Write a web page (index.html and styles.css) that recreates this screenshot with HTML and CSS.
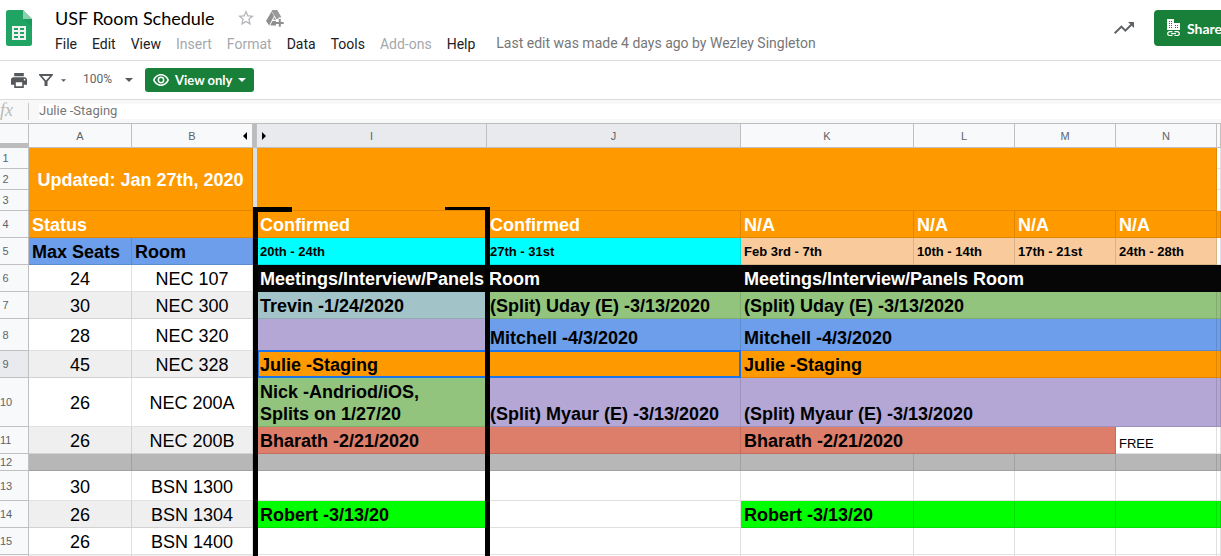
FILE: index.html
```
<!DOCTYPE html>
<html lang="en">
<head>
<meta charset="utf-8">
<title>USF Room Schedule</title>
<link rel="stylesheet" href="styles.css">
</head>
<body>
<header class="header">
  <svg class="logo" viewBox="0 0 26 36" aria-hidden="true">
    <path fill="#1fa463" d="M2.500 0H17l9 9v24.500a2.500 2.500 0 0 1-2.500 2.500h-21A2.500 2.500 0 0 1 0 33.500v-31A2.500 2.500 0 0 1 2.500 0z"/>
    <path fill="#8ed1b1" d="M17 0l9 9h-9z"/>
    <path fill="#179055" d="M17.500 9H26v8z" opacity=".5"/>
    <path fill="#f1f1f1" fill-rule="evenodd" d="M6 16h14v14H6zM8 18v2h4v-2zm6 0v2h4v-2zM8 22v2h4v-2zm6 0v2h4v-2zM8 26v2h4v-2zm6 0v2h4v-2z"/>
  </svg>
  <div class="doc">
    <div class="doc-title">
      <h1 class="title">USF Room Schedule</h1>
      <button class="icon-btn star" aria-label="Star">
        <svg width="16" height="16" viewBox="2 2 20 20"><path fill="#b4b6b9" d="M22 9.240l-7.190-.62L12 2 9.190 8.630 2 9.240l5.460 4.730L5.820 21 12 17.270 18.180 21l-1.630-7.030zM12 15.400l-3.760 2.270 1-4.280-3.320-2.880 4.380-.38L12 6.100l1.710 4.040 4.380.38-3.320 2.880 1 4.280z"/></svg>
      </button>
      <button class="icon-btn" aria-label="Add to My Drive">
        <svg width="18" height="17" viewBox="0 0 18 17"><path fill="#9a9a9a" d="M6.300 0h5l4.200 7.500h-3V9h-2L5.500.9z"/><path fill="#8f8f8f" d="M5.500 1.500L8 6 3.200 15.500 0 11z"/><path fill="#8f8f8f" d="M6.500 11H10v4.500H4.200zM8.600 7.200l1.400 2.600H7.200zM12.800 9h2v2.900h2.900v2h-2.900v2.900h-2v-2.900h-2.900v-2h2.900z"/></svg>
      </button>
    </div>
    <nav class="menu" aria-label="Menu bar">
      <button>File</button><button>Edit</button><button>View</button><button disabled>Insert</button><button disabled>Format</button><button>Data</button><button>Tools</button><button disabled>Add-ons</button><button>Help</button>
      <span class="last-edit">Last edit was made 4 days ago by Wezley Singleton</span>
    </nav>
  </div>
  <button class="icon-btn trend" aria-label="Activity">
    <svg width="20" height="12" viewBox="2 6 20 12"><path fill="#5f6368" d="M16 6l2.290 2.290-4.880 4.880-4-4L2 16.590 3.410 18l6-6 4 4 6.300-6.290L22 12V6z"/></svg>
  </button>
  <button class="share">
    <svg width="14" height="18" viewBox="0 0 14 18"><path fill="#fff" d="M0 0h7v4h6v7H0z"/><path fill="#188038" d="M2 2h1v1H2zM4 2h1v1H4zM2 4h1v1H2zM4 4h1v1H4zM2 6h1v1H2zM4 6h1v1H4zM2 8h1v1H2zM4 8h1v1H4zM8 6h1v1H8zM10 6h1v1h-1zM8 8h1v1H8zM10 8h1v1h-1z"/><path fill="none" stroke="#fff" stroke-width="1.200" d="M5.500 12.700H2.600a1.900 1.900 0 0 0 0 3.800h2.900M7.500 12.700h2.900a1.900 1.900 0 0 1 0 3.800H7.500M4 14.600h5"/></svg>
    <span>Share</span>
  </button>
</header>

<div class="toolbar" role="toolbar">
  <button class="icon-btn print" aria-label="Print">
    <svg width="16" height="15" viewBox="2 3 20 18" preserveAspectRatio="none"><path fill="#55585c" d="M19 8H5c-1.660 0-3 1.340-3 3v6h4v4h12v-4h4v-6c0-1.660-1.340-3-3-3zm-3 11H8v-5h8zm3-7a1 1 0 1 1 0-2 1 1 0 0 1 0 2zM18 3H6v4h12z"/></svg>
  </button>
  <button class="icon-btn filter" aria-label="Filter views">
    <svg width="14" height="12" viewBox="0 0 14 12"><path fill="#55585c" fill-rule="evenodd" d="M0 0h14v1L8.500 7.500V12h-3V7.500L0 1zM3 2l4 4.600L11 2z"/></svg>
    <svg width="5" height="3" viewBox="0 0 6 3"><path fill="#55585c" d="M0 0h6L3 3z"/></svg>
  </button>
  <label class="zoom">
    <select aria-label="Zoom"><option>100%</option></select>
    <svg width="8" height="4" viewBox="0 0 8 4"><path fill="#55585c" d="M0 0h8L4 4z"/></svg>
  </label>
  <button class="view-only">
    <svg width="16" height="12" viewBox="0 0 16 12"><path fill="#fff" fill-rule="evenodd" d="M8 0c3.600 0 6.700 2.500 8 6-1.300 3.500-4.400 6-8 6S1.300 9.500 0 6c1.300-3.500 4.400-6 8-6zm0 1.600C5.200 1.600 2.900 3.300 1.700 6c1.200 2.700 3.500 4.400 6.300 4.400s5.100-1.700 6.300-4.400C13.100 3.300 10.800 1.600 8 1.600z"/><circle cx="8" cy="6" r="2.700" fill="none" stroke="#fff" stroke-width="1.500"/></svg>
    <span>View only</span>
    <svg width="8" height="4" viewBox="0 0 8 4"><path fill="#fff" d="M0 0h8L4 4z"/></svg>
  </button>
</div>

<div class="formula">
  <label class="fx" for="formula">fx</label>
  <input id="formula" value="Julie -Staging" readonly>
</div>

<main class="sheet">
<table class="grid">
  <colgroup><col class="w-num"><col class="w-a"><col class="w-b"><col class="w-freeze"><col class="w-i"><col class="w-j"><col class="w-k"><col class="w-l"><col class="w-l"><col class="w-l"><col></colgroup>
  <thead>
    <tr class="letters">
      <th class="corner"></th><th>A</th>
      <th>B<button class="reveal left" aria-label="Show hidden columns"></button></th>
      <th class="freeze-head"></th>
      <th class="on"><button class="reveal right" aria-label="Show hidden columns"></button>I</th>
      <th class="on">J</th><th>K</th><th>L</th><th>M</th><th>N</th><th></th>
    </tr>
  </thead>
  <tbody>
    <tr class="h21"><th>1</th><td class="orange head center" colspan="2" rowspan="3">Updated: Jan 27th, 2020</td><td class="freeze" rowspan="3"></td><td class="orange" colspan="6" rowspan="3"></td><td></td></tr>
    <tr class="h21"><th>2</th><td></td></tr>
    <tr class="h21"><th>3</th><td></td></tr>
    <tr class="h27"><th>4</th><td class="orange head" colspan="2">Status</td><td class="freeze" rowspan="13"></td><td class="orange head">Confirmed</td><td class="orange head">Confirmed</td><td class="orange head">N/A</td><td class="orange head">N/A</td><td class="orange head">N/A</td><td class="orange head">N/A</td><td class="orange"></td></tr>
    <tr class="h27"><th>5</th><td class="blue bold">Max Seats</td><td class="blue bold">Room</td><td class="cyan date">20th - 24th</td><td class="cyan date">27th - 31st</td><td class="peach date">Feb 3rd - 7th</td><td class="peach date">10th - 14th</td><td class="peach date">17th - 21st</td><td class="peach date">24th - 28th</td><td></td></tr>
    <tr class="h27"><th>6</th><td class="room">24</td><td class="room">NEC 107</td><td class="black head" colspan="2">Meetings/Interview/Panels Room</td><td class="black head" colspan="4">Meetings/Interview/Panels Room</td><td class="black"></td></tr>
    <tr class="h27"><th>7</th><td class="room alt">30</td><td class="room alt">NEC 300</td><td class="teal bold">Trevin -1/24/2020</td><td class="green bold">(Split) Uday (E) -3/13/2020</td><td class="green bold" colspan="4">(Split) Uday (E) -3/13/2020</td><td class="green"></td></tr>
    <tr class="h32"><th>8</th><td class="room">28</td><td class="room">NEC 320</td><td class="purple"></td><td class="blue bold">Mitchell -4/3/2020</td><td class="blue bold" colspan="4">Mitchell -4/3/2020</td><td class="blue"></td></tr>
    <tr class="h27"><th class="on">9</th><td class="room alt">45</td><td class="room alt">NEC 328</td><td class="orange bold selected" colspan="2">Julie -Staging</td><td class="orange bold" colspan="4">Julie -Staging</td><td class="orange"></td></tr>
    <tr class="h49"><th>10</th><td class="room">26</td><td class="room">NEC 200A</td><td class="green bold">Nick -Andriod/iOS,<br>Splits on 1/27/20</td><td class="purple bold">(Split) Myaur (E) -3/13/2020</td><td class="purple bold" colspan="4">(Split) Myaur (E) -3/13/2020</td><td class="purple"></td></tr>
    <tr class="h27"><th>11</th><td class="room alt">26</td><td class="room alt">NEC 200B</td><td class="red bold" colspan="2">Bharath -2/21/2020</td><td class="red bold" colspan="3">Bharath -2/21/2020</td><td class="free">FREE</td><td></td></tr>
    <tr class="h17 gray"><th>12</th><td></td><td></td><td></td><td></td><td></td><td></td><td></td><td></td><td></td></tr>
    <tr class="h30"><th>13</th><td class="room">30</td><td class="room">BSN 1300</td><td></td><td></td><td></td><td></td><td></td><td></td><td></td></tr>
    <tr class="h27"><th>14</th><td class="room alt">26</td><td class="room alt">BSN 1304</td><td class="lime bold">Robert -3/13/20</td><td></td><td class="lime bold">Robert -3/13/20</td><td class="lime"></td><td class="lime"></td><td class="lime"></td><td class="lime"></td></tr>
    <tr class="h27"><th>15</th><td class="room">26</td><td class="room">BSN 1400</td><td></td><td></td><td></td><td></td><td></td><td></td><td></td></tr>
    <tr class="h27"><th></th><td class="alt"></td><td class="alt"></td><td></td><td></td><td></td><td></td><td></td><td></td><td></td></tr>
  </tbody>
</table>
<div class="mark mark-left"></div>
<div class="mark mark-right"></div>
</main>
</body>
</html>
```
FILE: styles.css
```
* { box-sizing: border-box; }

body {
  margin: 0;
  height: 100vh;
  overflow: hidden;
  display: flex;
  flex-direction: column;
  background: #fff;
  color: #202124;
  font-family: Roboto, "Liberation Sans", sans-serif;
}

button {
  margin: 0;
  padding: 0;
  border: 0;
  background: none;
  color: inherit;
  font: inherit;
  white-space: nowrap;
}

svg { display: block; flex: none; }

.icon-btn { display: flex; align-items: center; }

/* Header */
.header {
  flex: none;
  display: flex;
  align-items: flex-start;
  height: 61px;
  padding: 10px 0 0 6px;
  border-bottom: 1px solid #dadce0;
}
.logo { width: 26px; height: 36px; }
.doc { flex: 1; padding-left: 23px; margin-top: -4px; }
.doc-title { display: flex; align-items: center; height: 24px; }
.title {
  margin: 0 23px 0 0;
  font: 400 18px/24px Lato, sans-serif;
  color: #000;
}
.star { margin-right: 12px; }
.menu {
  display: flex;
  align-items: center;
  gap: 15px;
  height: 28px;
  font-size: 14px;
  color: #202124;
}
.menu button:disabled { color: #a5a8ac; }
.last-edit { padding: 0 0 2px 6px; color: #777; white-space: nowrap; }
.trend { margin: 12px 20px 0 0; }
.share {
  display: flex;
  align-items: center;
  gap: 6px;
  height: 36px;
  margin-right: -25px;
  padding: 0 24px 0 13px;
  border-radius: 4px;
  background: #188038;
  color: #fff;
  font: 700 14px Lato, sans-serif;
}

/* Toolbar */
.toolbar {
  flex: none;
  display: flex;
  align-items: center;
  height: 39px;
  padding-left: 11px;
  border-bottom: 1px solid #dadce0;
}
.print { margin-right: 12px; }
.filter { gap: 8px; margin-right: 17px; }
.zoom { display: flex; align-items: center; gap: 12px; margin-right: 12px; }
.zoom select {
  appearance: none;
  width: 30px;
  padding: 0 0 2px;
  border: 0;
  background: none;
  color: #5f6368;
  font: 12px/16px Roboto, sans-serif;
}
.view-only {
  display: flex;
  align-items: center;
  gap: 6px;
  height: 24px;
  padding: 0 8px;
  border-radius: 3px;
  background: #188038;
  color: #fff;
  font: 700 13px Lato, sans-serif;
}

/* Formula bar */
.formula {
  flex: none;
  display: flex;
  align-items: center;
  height: 24px;
  border-bottom: 1px solid #bdbdbd;
  background: #f8f8f8;
}
.fx {
  width: 29px;
  height: 17px;
  border-right: 1px solid #c8c8c8;
  color: #b8b8b8;
  font: italic 18px/14px "Liberation Serif", serif;
}
.formula input {
  flex: 1;
  min-width: 0;
  height: 15px;
  margin-left: 10px;
  padding: 0 0 2px;
  border: 0;
  background: #fff;
  color: #777;
  font: 13px/13px Roboto, sans-serif;
}

/* Sheet */
.sheet { position: relative; flex: 1; min-height: 0; overflow: hidden; }
.grid {
  width: 100%;
  table-layout: fixed;
  border-spacing: 0;
  font-family: "Liberation Sans", Arial, sans-serif;
  color: #000;
}
.w-num { width: 29px; }
.w-a { width: 103px; }
.w-b { width: 121px; }
.w-freeze { width: 4px; }
.w-i { width: 230px; }
.w-j { width: 254px; }
.w-k { width: 173px; }
.w-l { width: 101px; }

.letters { height: 24px; }
.h17 { height: 17px; }
.h21 { height: 21px; }
.h27 { height: 27px; }
.h30 { height: 30px; }
.h32 { height: 32px; }
.h49 { height: 49px; }

.grid th {
  position: relative;
  padding: 0;
  border: solid #c0c0c0;
  border-width: 0 1px 1px 0;
  background: #f8f9fa;
  color: #5f6368;
  font-size: 11px;
  font-weight: 400;
  line-height: 12px;
}
.grid tbody th { padding-right: 17px; }
.grid th.on { background: #e8eaed; }
.grid th.corner { border-bottom: 5px solid #bcbcbc; }
.grid th.freeze-head { background: #bcbcbc; }

.grid td {
  padding: 0 0 1px 3px;
  border: solid rgba(0, 0, 0, 0.12);
  border-width: 0 1px 1px 0;
  font-size: 18px;
  line-height: 22px;
  vertical-align: bottom;
  white-space: nowrap;
}
.h17 td { line-height: 12px; }
.h21 td { line-height: 16px; }
.grid td.freeze { padding: 0; border: 0; background: #dadfe8; }

.grid .head { color: #fff; font-weight: 700; }
.grid .bold { font-weight: 700; }
.grid .center,
.grid .room { padding: 2px 0 0; text-align: center; vertical-align: middle; }
.grid .date { padding: 2px 0 0 3px; font-size: 13px; font-weight: 700; vertical-align: middle; }
.grid .free { font-size: 13px; line-height: 16px; }

.alt { background: #efefef; }
.orange { background: #ff9900; }
.blue { background: #6d9eeb; }
.cyan { background: #00ffff; }
.peach { background: #f9cb9c; }
.black { background: #060606; }
.teal { background: #a2c4c9; }
.green { background: #93c47d; }
.purple { background: #b4a7d6; }
.red { background: #dd7e6b; }
.lime { background: #00ff00; }
.gray td { background: #b7b7b7; }

.selected { position: relative; }
.selected::after {
  content: "";
  position: absolute;
  inset: -1px -1px -1px 0;
  border: 2px solid #1a73e8;
}

.reveal {
  position: absolute;
  top: 8px;
  border: solid transparent;
  border-width: 4px 0;
}
.reveal.left { right: 5px; border-right: 4px solid #000; }
.reveal.right { left: 5px; border-left: 4px solid #000; }

/* Hand-drawn bracket round column I */
.mark { position: absolute; top: 83px; bottom: 0; }
.mark::before { content: ""; position: absolute; top: 0; background: #000; }
.mark-left { left: 253px; border-left: 5px solid #000; }
.mark-left::before { left: 0; width: 34px; height: 5px; }
.mark-right { left: 485px; border-left: 5px solid #000; }
.mark-right::before { right: 0; width: 45px; height: 3px; }
```
